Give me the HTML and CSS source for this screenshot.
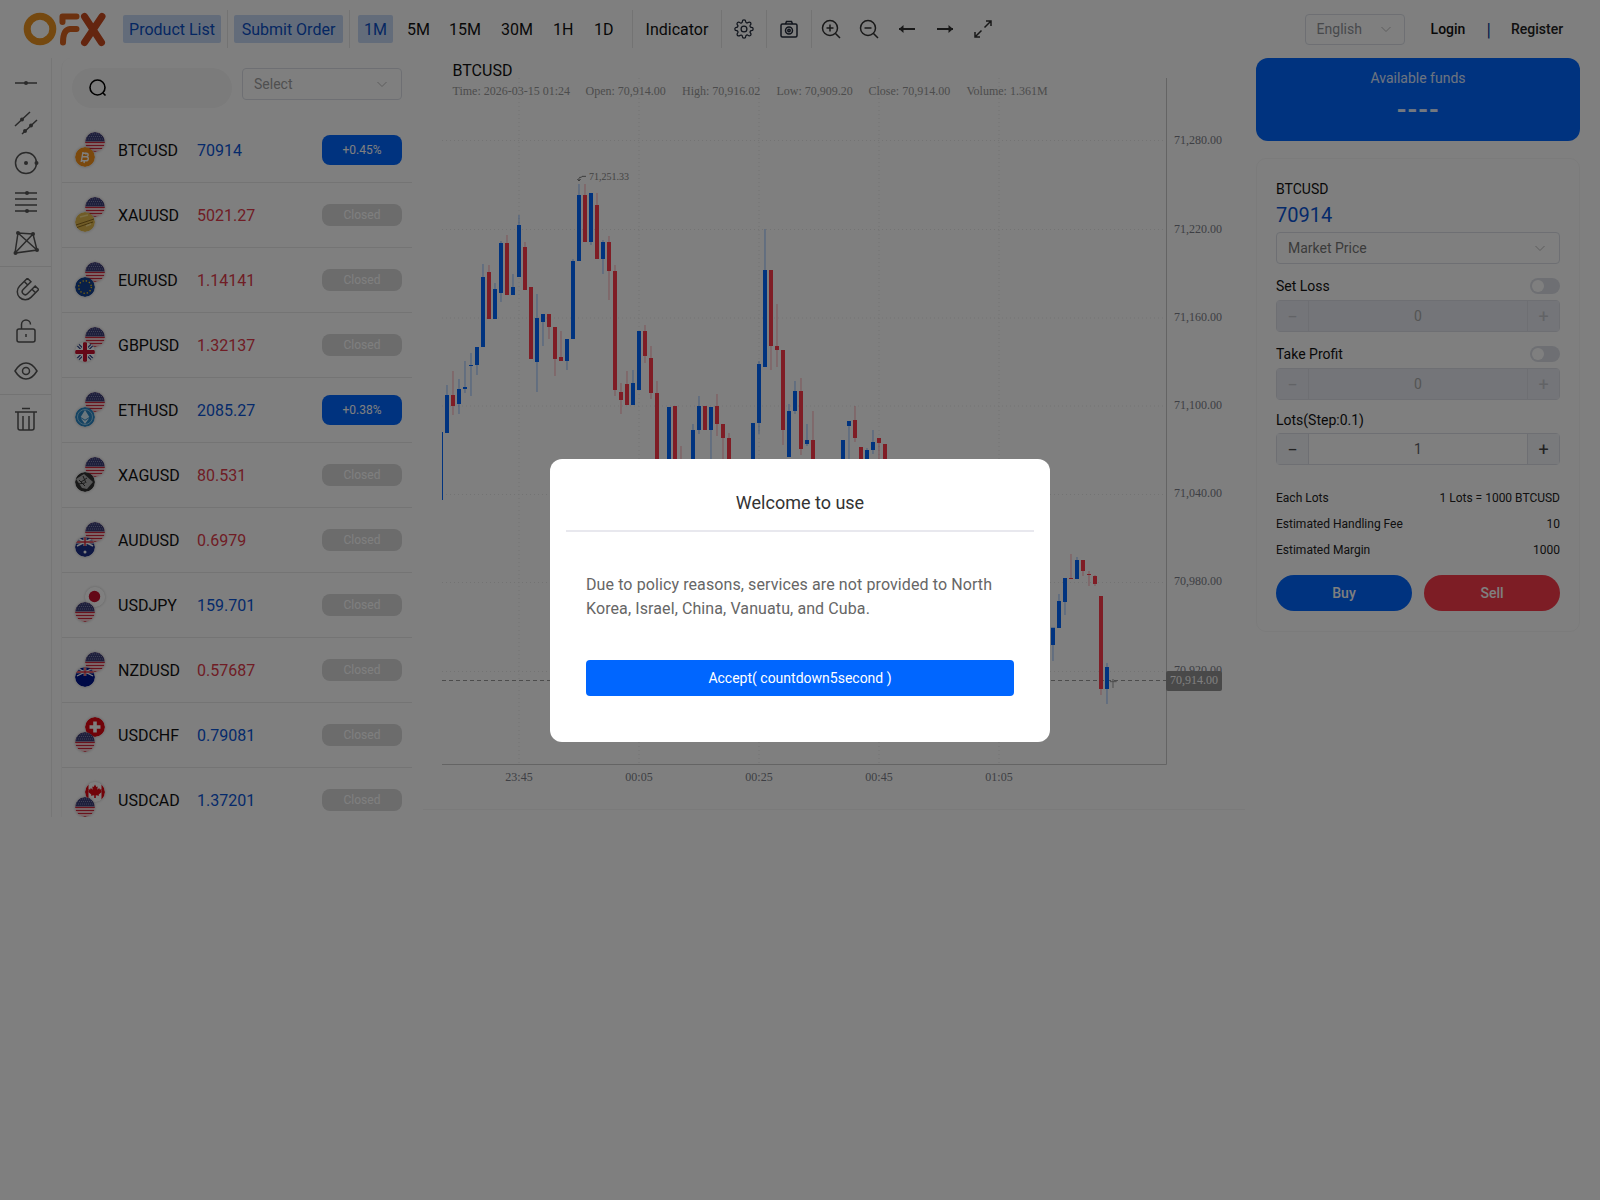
FILE: index.html
```html
<!DOCTYPE html>
<html lang="en">
<head>
<meta charset="utf-8">
<title>OFX</title>
<link rel="stylesheet" href="styles.css">
</head>
<body>
<svg class="defs" aria-hidden="true">
  <defs>
    <clipPath id="disc"><circle cx="10" cy="10" r="10"/></clipPath>
    <symbol id="chev" viewBox="0 0 12 12"><path d="M1.5 4l4.500 4.500L10.500 4" fill="none" stroke="currentColor"/></symbol>
    <symbol id="us" viewBox="0 0 20 20"><g clip-path="url(#disc)"><rect width="20" height="20" fill="#fff"/><path d="M0 1.500h20M0 4.500h20M0 7.500h20M0 10.500h20M0 13.500h20M0 16.500h20M0 19.500h20" stroke="#d3273a" stroke-width="1.500"/><rect width="20" height="9.500" fill="#3c3f78"/><path d="M1 2h18M2 4.500h16M1 7h18" stroke="#8d90b8" stroke-width=".8" stroke-dasharray="1 1"/></g></symbol>
    <symbol id="btc" viewBox="0 0 20 20"><circle cx="10" cy="10" r="10" fill="#f7931a"/><path d="M8 5l-1.800 10M11 5.500l-.4 2M9.400 14l-.4 2M7.600 6.200h3.600c2.600 0 2.600 3.500 0 3.600H7M7 9.800h4.400c2.800.2 2.400 4-.4 4H5.900" fill="none" stroke="#fff" stroke-width="1.400"/></symbol>
    <symbol id="gold" viewBox="0 0 20 20"><circle cx="10" cy="10" r="10" fill="#e0b84e"/><path d="M1 13L19 7M2 15.500L18 10" stroke="#8e6b1e" stroke-width="1"/><path d="M5 5l8-2M11 14l5-2" stroke="#f6dc8c" stroke-width="1.500"/></symbol>
    <symbol id="eu" viewBox="0 0 20 20"><circle cx="10" cy="10" r="10" fill="#13408f"/><circle cx="10" cy="10" r="6.300" fill="none" stroke="#f5c518" stroke-width="1.300" stroke-dasharray="1.300 2"/></symbol>
    <symbol id="gb" viewBox="0 0 20 20"><g clip-path="url(#disc)"><rect width="20" height="20" fill="#fff"/><path d="M0 0l20 20M20 0L0 20" stroke="#2b3f86" stroke-width="3.500"/><path d="M0 0l20 20M20 0L0 20" stroke="#fff" stroke-width="1.200"/><path d="M10 0v20M0 10h20" stroke="#fff" stroke-width="6"/><path d="M10 0v20M0 10h20" stroke="#c8102e" stroke-width="4"/></g></symbol>
    <symbol id="eth" viewBox="0 0 20 20"><circle cx="10" cy="10" r="10" fill="#2b86c5"/><circle cx="10" cy="10" r="7.500" fill="none" stroke="#a4d8f0" stroke-width=".8"/><path d="M10 3l4.300 7L10 12.700 5.700 10zM5.700 11l4.300 6 4.300-6L10 13.700z" fill="#d6eefa"/></symbol>
    <symbol id="xag" viewBox="0 0 20 20"><circle cx="10" cy="10" r="10" fill="#333"/><path d="M1 7l8-5 9 8-6 7-5-1z" fill="#aaa"/><path d="M4 8l6 6M8 4l3 7M12 6l-6 4M3 12l7-1" stroke="#333"/></symbol>
    <symbol id="au" viewBox="0 0 20 20"><g clip-path="url(#disc)"><rect width="20" height="20" fill="#1d2f86"/><g stroke="#fff" stroke-width="1.500"><path d="M2 1l16 8M18 1L2 9"/><path d="M10 0v9M0 5h20" stroke-width="3"/></g><path d="M10 0v9M0 5h20" stroke="#d3273a" stroke-width="1.500"/><circle cx="10" cy="15" r="1.500" fill="#fff"/></g></symbol>
    <symbol id="jp" viewBox="0 0 20 20"><circle cx="10" cy="10" r="10" fill="#fff"/><circle cx="9.500" cy="9.500" r="5.700" fill="#c8102e"/></symbol>
    <symbol id="nz" viewBox="0 0 20 20"><g clip-path="url(#disc)"><rect width="20" height="20" fill="#00148c"/><g stroke="#fff" stroke-width="1.300"><path d="M2 1l16 8M18 1L2 9"/><path d="M10 0v9M0 5h20" stroke-width="2.600"/></g><path d="M10 0v9M0 5h20" stroke="#d3273a" stroke-width="1.300"/></g></symbol>
    <symbol id="ch" viewBox="0 0 20 20"><circle cx="10" cy="10" r="10" fill="#e30613"/><path d="M10 4.500v11M4.500 10h11" stroke="#fff" stroke-width="3.600"/></symbol>
    <symbol id="ca" viewBox="0 0 20 20"><g clip-path="url(#disc)"><rect width="20" height="20" fill="#fff"/><rect width="3.500" height="20" fill="#e30613"/><rect x="16.500" width="3.500" height="20" fill="#e30613"/><path d="M10 2.500l1.400 2.600 1.300-.7-.4 3.300 1.900-1.600.6 1.400 2-.3-.7 2.100.9.500-3.300 2.600.4 1.300-3.300-.4v2.600h-1.600v-2.600l-3.300.4.400-1.300-3.300-2.600.9-.5-.7-2.100 2 .3.600-1.400 1.900 1.600-.4-3.300 1.300.7z" fill="#e30613"/></g></symbol>
  </defs>
</svg>

<header class="topbar">
  <svg class="logo" width="83" height="36" viewBox="23 11 83 36">
    <g fill="none" stroke-width="7" stroke-linecap="round" stroke-linejoin="round">
      <circle cx="40" cy="29" r="12.800" stroke="#ea9220"/>
      <path d="M62.500 22v-5.500h14" stroke="#d9621f" stroke-width="6"/>
      <path d="M63 42.500c0-9 2-13 7-13.500h6.500" stroke="#d9621f" stroke-width="6"/>
      <path d="M84.500 16.500l17 26M102 16.500l-17.500 26" stroke="#c84a1e"/>
    </g>
  </svg>
  <a class="pill pill-list">Product List</a>
  <i class="vline"></i>
  <a class="pill pill-order">Submit Order</a>
  <i class="vline"></i>
  <div class="tabs">
    <a class="pill tab-on">1M</a><a class="tab t5">5M</a><a class="tab t15">15M</a><a class="tab t30">30M</a><a class="tab t1h">1H</a><a class="tab t1d">1D</a>
  </div>
  <i class="vline"></i>
  <a class="indicator">Indicator</a>
  <i class="vline"></i>
  <span class="tool"><svg width="20" height="20" viewBox="0 0 24 24" class="ico"><circle cx="12" cy="12" r="3.500"/><path d="M19.400 15a1.650 1.650 0 0 0 .33 1.820l.06.06a2 2 0 0 1 0 2.830 2 2 0 0 1-2.830 0l-.06-.06a1.650 1.650 0 0 0-1.820-.33 1.650 1.650 0 0 0-1 1.510V21a2 2 0 0 1-2 2 2 2 0 0 1-2-2v-.09A1.650 1.650 0 0 0 9 19.400a1.650 1.650 0 0 0-1.820.33l-.06.06a2 2 0 0 1-2.830 0 2 2 0 0 1 0-2.830l.06-.06a1.650 1.650 0 0 0 .33-1.820 1.650 1.650 0 0 0-1.510-1H3a2 2 0 0 1-2-2 2 2 0 0 1 2-2h.09A1.650 1.650 0 0 0 4.600 9a1.650 1.650 0 0 0-.33-1.820l-.06-.06a2 2 0 0 1 0-2.830 2 2 0 0 1 2.830 0l.06.06a1.650 1.650 0 0 0 1.820.33H9a1.650 1.650 0 0 0 1-1.510V3a2 2 0 0 1 2-2 2 2 0 0 1 2 2v.09a1.650 1.650 0 0 0 1 1.510 1.650 1.650 0 0 0 1.820-.33l.06-.06a2 2 0 0 1 2.830 0 2 2 0 0 1 0 2.830l-.06.06a1.650 1.650 0 0 0-.33 1.820V9a1.650 1.650 0 0 0 1.510 1H21a2 2 0 0 1 2 2 2 2 0 0 1-2 2h-.09a1.650 1.650 0 0 0-1.510 1z"/></svg></span>
  <i class="vline"></i>
  <span class="tool"><svg width="20" height="20" viewBox="0 0 20 20" class="ico"><rect x="2" y="5" width="16" height="13" rx="1.500"/><path d="M6.500 5l1-2.500h5l1 2.500"/><circle cx="10" cy="11.500" r="3.500"/><circle cx="10" cy="11.500" r="1.200"/></svg></span>
  <i class="vline"></i>
  <div class="tools">
    <svg width="20" height="20" viewBox="0 0 20 20" class="ico dark"><circle cx="9" cy="9" r="7.500"/><path d="M14.500 14.500L19 19M9 5.500v7M5.500 9h7"/></svg>
    <svg width="20" height="20" viewBox="0 0 20 20" class="ico dark"><circle cx="9" cy="9" r="7.500"/><path d="M14.500 14.500L19 19M5.500 9h7"/></svg>
    <svg width="20" height="20" viewBox="0 0 20 20" class="ico dark"><path d="M2 10h16" stroke-width="2"/><path d="M6.500 6L2 10l4.500 4" fill="#333" stroke="none"/></svg>
    <svg width="20" height="20" viewBox="0 0 20 20" class="ico dark"><path d="M2 10h16" stroke-width="2"/><path d="M13.500 6L18 10l-4.500 4" fill="#333" stroke="none"/></svg>
    <svg width="20" height="20" viewBox="0 0 20 20" class="ico dark"><path d="M11.500 8.500L18 2M13 2h5v5M8.500 11.500L2 18M2 13v5h5"/></svg>
  </div>
  <div class="auth">
    <div class="lang"><span>English</span><svg width="12" height="12"><use href="#chev"/></svg></div>
    <a class="login">Login</a>
    <span class="sep">|</span>
    <a class="register">Register</a>
  </div>
</header>

<main class="main">
  <aside class="sidebar">
    <div class="side-group">
      <span class="side-ico"><svg width="26" height="26" viewBox="0 0 26 26" class="ico side"><path d="M2 13h22"/><circle cx="13" cy="13" r="2" fill="#555" stroke="none"/></svg></span>
      <span class="side-ico"><svg width="26" height="26" viewBox="0 0 26 26" class="ico side"><path d="M2 16L17 2M9 24L24 10"/><circle cx="9" cy="9.500" r="2" fill="#555" stroke="none"/><circle cx="12" cy="21" r="2" fill="#555" stroke="none"/><circle cx="18" cy="15.500" r="2" fill="#555" stroke="none"/></svg></span>
      <span class="side-ico"><svg width="26" height="26" viewBox="0 0 26 26" class="ico side"><circle cx="13" cy="13" r="10.500"/><circle cx="13" cy="13" r="2" fill="#555" stroke="none"/><circle cx="23.500" cy="13" r="2" fill="#555" stroke="none"/></svg></span>
      <span class="side-ico"><svg width="26" height="26" viewBox="0 0 26 26" class="ico side"><path d="M2 3h22M2 9h22M2 15h22M2 21h22" stroke-width="1.300"/><circle cx="14" cy="3" r="2" fill="#555" stroke="none"/><circle cx="14" cy="21" r="2" fill="#555" stroke="none"/></svg></span>
      <span class="side-ico"><svg width="26" height="26" viewBox="0 0 26 26" class="ico side"><path d="M5 3L2 23 24 20 20 4 5 3zM5 3l19 17M20 4L2 23"/><circle cx="5" cy="3" r="2" fill="#555" stroke="none"/><circle cx="20" cy="4" r="2" fill="#555" stroke="none"/><circle cx="24" cy="20" r="2" fill="#555" stroke="none"/><circle cx="2.500" cy="23" r="2" fill="#555" stroke="none"/></svg></span>
    </div>
    <div class="side-group">
      <span class="side-ico"><svg width="26" height="26" viewBox="0 0 26 26" class="ico side"><g transform="rotate(45 13 13)"><path d="M5 3h5v11a3 3 0 0 0 6 0V3h5v11a8 8 0 0 1-16 0zM5 7.500h5M16 7.500h5"/></g></svg></span>
      <span class="side-ico"><svg width="26" height="26" viewBox="0 0 26 26" class="ico side"><rect x="4" y="11" width="18" height="13" rx="2"/><path d="M8.500 11V6.500a4.500 4.500 0 0 1 9 0M13 16v3"/></svg></span>
      <span class="side-ico"><svg width="26" height="26" viewBox="0 0 26 26" class="ico side"><path d="M2 13c3-5 7-8 11-8s8 3 11 8c-3 5-7 8-11 8s-8-3-11-8z"/><circle cx="13" cy="13" r="3.500"/></svg></span>
    </div>
    <div class="side-group last">
      <span class="side-ico"><svg width="26" height="26" viewBox="0 0 26 26" class="ico side"><path d="M2 6h22M9 2.500h8M5 6v16a2 2 0 0 0 2 2h12a2 2 0 0 0 2-2V6M10 10v14M16 10v14"/></svg></span>
    </div>
  </aside>

  <section class="list">
    <div class="list-head">
      <div class="search"><svg width="20" height="20" viewBox="0 0 20 20" class="ico black"><circle cx="9.500" cy="9.500" r="7.500"/><path d="M15 15l2.500 2.500"/></svg></div>
      <div class="select"><span>Select</span><svg width="12" height="12"><use href="#chev"/></svg></div>
    </div>
    <div class="row"><span class="flags"><svg class="f-top"><use href="#us"/></svg><svg class="f-bot"><use href="#btc"/></svg></span><span class="sym">BTCUSD</span><span class="price up">70914</span><span class="badge open">+0.45%</span></div>
    <div class="row"><span class="flags"><svg class="f-top"><use href="#us"/></svg><svg class="f-bot"><use href="#gold"/></svg></span><span class="sym">XAUUSD</span><span class="price down">5021.27</span><span class="badge closed">Closed</span></div>
    <div class="row"><span class="flags"><svg class="f-top"><use href="#us"/></svg><svg class="f-bot"><use href="#eu"/></svg></span><span class="sym">EURUSD</span><span class="price down">1.14141</span><span class="badge closed">Closed</span></div>
    <div class="row"><span class="flags"><svg class="f-top"><use href="#us"/></svg><svg class="f-bot"><use href="#gb"/></svg></span><span class="sym">GBPUSD</span><span class="price down">1.32137</span><span class="badge closed">Closed</span></div>
    <div class="row"><span class="flags"><svg class="f-top"><use href="#us"/></svg><svg class="f-bot"><use href="#eth"/></svg></span><span class="sym">ETHUSD</span><span class="price up">2085.27</span><span class="badge open">+0.38%</span></div>
    <div class="row"><span class="flags"><svg class="f-top"><use href="#us"/></svg><svg class="f-bot"><use href="#xag"/></svg></span><span class="sym">XAGUSD</span><span class="price down">80.531</span><span class="badge closed">Closed</span></div>
    <div class="row"><span class="flags"><svg class="f-top"><use href="#us"/></svg><svg class="f-bot"><use href="#au"/></svg></span><span class="sym">AUDUSD</span><span class="price down">0.6979</span><span class="badge closed">Closed</span></div>
    <div class="row"><span class="flags"><svg class="f-top"><use href="#jp"/></svg><svg class="f-bot"><use href="#us"/></svg></span><span class="sym">USDJPY</span><span class="price up">159.701</span><span class="badge closed">Closed</span></div>
    <div class="row"><span class="flags"><svg class="f-top"><use href="#us"/></svg><svg class="f-bot"><use href="#nz"/></svg></span><span class="sym">NZDUSD</span><span class="price down">0.57687</span><span class="badge closed">Closed</span></div>
    <div class="row"><span class="flags"><svg class="f-top"><use href="#ch"/></svg><svg class="f-bot"><use href="#us"/></svg></span><span class="sym">USDCHF</span><span class="price up">0.79081</span><span class="badge closed">Closed</span></div>
    <div class="row"><span class="flags"><svg class="f-top"><use href="#ca"/></svg><svg class="f-bot"><use href="#us"/></svg></span><span class="sym">USDCAD</span><span class="price up">1.37201</span><span class="badge closed">Closed</span></div>
  </section>

  <section class="chart">
    <svg class="chart-svg" width="822" height="752" viewBox="423 58 822 752">
      <g class="grid">
        <path d="M442 140.500H1166M442 229.500H1166M442 318H1166M442 406H1166M442 494.500H1166M442 582.500H1166M442 671.500H1166"/>
        <path d="M519 78V764M639 78V764M759 78V764M879 78V764M999 78V764"/>
      </g>
      <path class="axis" d="M1166.500 78V764.500H442"/>
      <text class="c-title" x="452.500" y="76">BTCUSD</text>
      <g class="c-info">
        <text x="452.500" y="95">Time: 2026-03-15 01:24</text>
        <text x="585.500" y="95">Open: 70,914.00</text>
        <text x="682" y="95">High: 70,916.02</text>
        <text x="776.500" y="95">Low: 70,909.20</text>
        <text x="868.500" y="95">Close: 70,914.00</text>
        <text x="966.500" y="95">Volume: 1.361M</text>
      </g>
      <g class="c-ax">
        <text x="1174" y="143.500">71,280.00</text>
        <text x="1174" y="232.500">71,220.00</text>
        <text x="1174" y="320.500">71,160.00</text>
        <text x="1174" y="408.500">71,100.00</text>
        <text x="1174" y="497">71,040.00</text>
        <text x="1174" y="585">70,980.00</text>
        <text x="1174" y="674">70,920.00</text>
      </g>
      <g class="c-ax mid">
        <text x="519" y="780.500">23:45</text>
        <text x="639" y="780.500">00:05</text>
        <text x="759" y="780.500">00:25</text>
        <text x="879" y="780.500">00:45</text>
        <text x="999" y="780.500">01:05</text>
      </g>
      <path class="price-line" d="M442 680.500H1166"/>
      <path class="first" d="M442.500 432V500"/>
      <g transform="translate(430 150) scale(.33333)">
        <path class="wick blue" d="M51 705V735M87 687V792M105 633V729M123 609V738M141 645V675M159 342V381M195 399V417M213 273V456M249 372V411M267 195V225M321 432V726M339 516V588M411 633V660M429 327V333M447 102V135M483 276V285M519 270V372M609 660V699M789 822V840M807 738V852M843 840V930M987 633V852M1005 237V360M1077 762V783M1095 693V792M1131 822V888M1257 828V930M1311 894V900M1329 840V912"/>
        <path class="wick red" d="M69 663V795M177 345V366M231 255V279M285 276V291M357 531V567M375 627V678M393 543V621M465 102V135M501 129V165M537 258V450M555 345V738M573 699V792M591 663V702M645 525V639M663 588V747M681 693V729M753 888V930M861 732V858M879 864V930M897 849V864M1023 588V660M1041 462V651M1059 840V885M1113 684V915M1149 783V870M1275 768V876M1347 879V930"/>
        <path class="body blue" d="M51 735V849M87 717V762M105 711V717M123 645V648M141 591V645M159 381V591M195 417V507M213 279V429M249 411V435M267 225V381M321 504V636M339 492V516M411 567V633M429 333V567M447 135V333M483 129V276M519 276V327M609 699V765M627 543V720M717 771V930M789 840V930M807 768V840M843 771V840M969 819V930M987 642V819M1005 360V651M1077 783V921M1095 723V783M1131 870V882M1239 870V930M1257 813V828M1311 900V930M1329 876V900"/>
        <path class="body red" d="M69 735V768M177 366V507M231 279V435M285 291V420M303 411V627M357 492V531M375 531V627M393 621V633M465 135V276M501 165V327M537 276V363M555 363V720M573 726V750M591 702V765M645 543V618M663 624V729M681 729V930M735 768V930M825 768V840M861 768V822M879 822V864M897 864V930M1023 360V588M1041 588V600M1059 600V840M1113 723V897M1149 870V930M1275 810V864M1293 891V930M1347 864V879M1365 882V930"/>
        <path class="marker" d="M468 79h-12l-2 3h-5l-2 3v8M442 87l5 6 5-6"/>
      </g>
      <text class="c-max" x="589" y="180">71,251.33</text>
      <g transform="translate(1020 530) scale(.33333)">
        <path class="wick blue" d="M99 345V393M117 192V213M135 216V255M171 81V90"/>
        <path class="wick red" d="M153 72V144M189 123V138M207 123V168M225 135V168M243 477V495"/>
        <path class="wick blue" d="M261 399V522"/>
        <path class="body blue" d="M99 293V345M117 213V294M135 144V216M171 90V147M261 411V477"/>
        <path class="body red" d="M153 144V147M189 90V123M207 132V135M225 138V162M243 198V477"/>
        <path class="marker now" d="M279 447V474M270 455H290"/>
      </g>
      <rect class="tag" x="1166" y="671" width="56" height="20" rx="2"/>
      <text class="tag-t" x="1170" y="683.500">70,914.00</text>
    </svg>
  </section>

  <aside class="side-right">
    <div class="funds">
      <div class="funds-l">Available funds</div>
      <div class="funds-v">----</div>
    </div>
    <div class="order">
      <div class="o-sym">BTCUSD</div>
      <div class="o-price">70914</div>
      <div class="select wide"><span>Market Price</span><svg width="12" height="12"><use href="#chev"/></svg></div>
      <div class="o-label"><span>Set Loss</span><i class="toggle"></i></div>
      <div class="stepper off"><b>−</b><span>0</span><b>+</b></div>
      <div class="o-label"><span>Take Profit</span><i class="toggle"></i></div>
      <div class="stepper off"><b>−</b><span>0</span><b>+</b></div>
      <div class="o-label lots"><span>Lots(Step:0.1)</span></div>
      <div class="stepper"><b>−</b><span>1</span><b>+</b></div>
      <div class="facts">
        <div><span>Each Lots</span><span>1 Lots = 1000 BTCUSD</span></div>
        <div><span>Estimated Handling Fee</span><span>10</span></div>
        <div><span>Estimated Margin</span><span>1000</span></div>
      </div>
      <div class="actions"><button class="buy">Buy</button><button class="sell">Sell</button></div>
    </div>
  </aside>
</main>

<div class="overlay">
  <div class="modal">
    <h2 class="m-title">Welcome to use</h2>
    <p class="m-body">Due to policy reasons, services are not provided to North Korea, Israel, China, Vanuatu, and Cuba.</p>
    <button class="m-btn">Accept( countdown5second )</button>
  </div>
</div>
</body>
</html>
```

FILE: styles.css
```css
* { box-sizing: border-box; }
html, body { margin: 0; height: 100%; }
body {
  background: #fff;
  font-family: Roboto, "Noto Sans", sans-serif;
  font-size: 16px;
  color: #111;
  height: 1200px;
  overflow: hidden;
}
.defs { position: absolute; width: 0; height: 0; }

/* top bar */
.topbar { display: flex; align-items: center; height: 58px; padding-left: 23px; }
.logo { margin-right: 17px; flex: none; }
.vline { width: 1px; height: 38px; background: #e6e6e6; flex: none; margin: 0 6px; }
.pill {
  display: flex; align-items: center; justify-content: center; height: 28px; padding: 0;
  background: #c6d9f5; color: #0b4fc4; border-radius: 2px; white-space: nowrap; flex: none;
}
.pill-list { width: 98px; }
.pill-order { width: 109px; }
.tabs { display: flex; align-items: center; margin-left: 2px; width: 268px; }
.tab-on { width: 35px; }
.tab { flex: none; text-align: left; color: #111; }
.t5 { width: 42px; margin-left: 14px; }
.t15 { width: 52px; }
.t30 { width: 52px; }
.t1h { width: 41px; }
.t1d { width: 30px; }
.indicator { flex: none; width: 64px; margin: 0 6px; text-align: center; }
.tool { display: flex; width: 32px; justify-content: center; }
.tools { display: flex; gap: 18px; margin-left: 3px; }
.ico { fill: none; stroke: #222a3a; stroke-width: 1.500; flex: none; }
.ico.dark { stroke: #333; }
.ico.side { stroke: #555; stroke-width: 1.500; }
.ico.black { stroke: #000; stroke-width: 1.600; }
.auth { display: flex; align-items: center; margin-left: auto; padding-right: 35px; font-size: 14px; }
.lang {
  display: flex; align-items: center; justify-content: space-between;
  width: 100px; height: 31px; padding: 0 12px 0 11px;
  border: 1px solid #dcdfe6; border-radius: 4px; color: #909399;
}
.lang svg, .select svg { color: #bbb; }
.login { width: 36px; margin-left: 26px; font-weight: 500; color: #111; }
.sep { margin-left: 20px; font-size: 18px; color: #0b3d99; }
.register { width: 54px; margin-left: 20px; color: #222; font-weight: 500; }

/* layout */
.main { display: flex; height: 759px; }
.sidebar { width: 52px; border-right: 1px solid #ececec; padding-top: 5px; flex: none; }
.side-group { display: flex; flex-direction: column; align-items: center; padding-bottom: 3px; margin-bottom: 4px; border-bottom: 1px solid #e6e6e6; }
.side-group.last { border-bottom: 0; }
.side-ico { display: flex; align-items: center; justify-content: center; width: 100%; height: 40px; }

/* list */
.list { width: 351px; margin-left: 9px; overflow: hidden; flex: none; border-left: 1px solid #f7f7f7; border-top-left-radius: 10px; }
.list-head { display: flex; gap: 10px; height: 60px; padding: 10px 10px 0 10px; }
.search { display: flex; align-items: center; width: 160px; height: 40px; padding-left: 16px; background: #f6f6f6; border-radius: 20px; }
.select {
  display: flex; align-items: center; justify-content: space-between;
  width: 160px; height: 32px; padding: 0 13px 0 11px;
  border: 1px solid #dcdfe6; border-radius: 4px; font-size: 14px; color: #a0a0a0;
}
.row { display: flex; align-items: center; height: 65px; padding: 0 10px 0 13px; border-bottom: 1px solid #e9e9e9; }
.flags { position: relative; width: 32px; height: 36px; margin-right: 11px; flex: none; }
.f-top, .f-bot { position: absolute; width: 20px; height: 20px; border-radius: 50%; box-shadow: 0 0 3px rgba(0, 0, 0, .25); }
.f-top { left: 10px; top: 0; }
.f-bot { left: 0; top: 15px; }
.sym { width: 79px; flex: none; font-size: 16px; }
.price { font-size: 16px; }
.up { color: #0a55d6; }
.down { color: #e03a4a; }
.badge { display: flex; align-items: center; justify-content: center; width: 80px; margin-left: auto; color: #fff; font-size: 12px; border-radius: 8px; }
.badge.open { height: 30px; background: #0066ff; }
.badge.closed { height: 22px; background: #d8d8d8; }

/* chart */
.chart { width: 822px; height: 752px; margin-left: 11px; flex: none; border-bottom: 1px solid #f5f5f5; }
.chart-svg { display: block; }
.grid path { fill: none; stroke: #e6e6e6; stroke-dasharray: 1 3; }
.axis { fill: none; stroke: #c8c8c8; }
.c-title { font-size: 16px; fill: #111; }
.c-info text { font-family: "Liberation Serif", serif; font-size: 12px; fill: #999; }
.c-ax text { font-family: "Liberation Serif", serif; font-size: 12px; fill: #7c7f88; }
.c-ax.mid text { text-anchor: middle; }
.c-max { font-family: "Liberation Serif", serif; font-size: 10px; fill: #888; }
.price-line { stroke: #999; stroke-dasharray: 4 3; fill: none; }
.first { stroke: #0066ff; fill: none; }
.wick { fill: none; stroke-width: 3; opacity: .45; }
.body { fill: none; stroke-width: 12; }
.blue { stroke: #0066ff; }
.red { stroke: #ff3a4a; }
.marker { fill: none; stroke: #777; stroke-width: 3; }
.marker.now { stroke: #999; }
.tag { fill: #929292; }
.tag-t { font-family: "Liberation Serif", serif; font-size: 12px; fill: #fff; }

/* right column */
.side-right { width: 324px; margin-left: 11px; flex: none; }
.funds { height: 83px; background: #0066ff; border-radius: 12px; color: #fff; text-align: center; padding-top: 9px; }
.funds-l { font-size: 14px; line-height: 22px; opacity: .85; }
.funds-v { font-size: 26px; font-weight: 700; line-height: 26px; margin-top: 8px; letter-spacing: .5px; opacity: .9; }
.order { margin-top: 17px; height: 474px; padding: 19px 19px 0; border: 1px solid #f6f6f6; border-radius: 10px; }
.o-sym { font-size: 14px; line-height: 22px; }
.o-price { font-size: 20px; line-height: 30px; color: #0a55d6; }
.select.wide { width: 284px; height: 32px; margin-top: 2px; color: #777; }
.o-label { display: flex; align-items: center; justify-content: space-between; height: 22px; margin-top: 11px; margin-bottom: 3px; font-size: 14px; }
.o-label.lots { margin-top: 9px; margin-bottom: 2px; }
.toggle { position: relative; width: 30px; height: 16px; border-radius: 8px; background: #dcdfe6; display: block; }
.toggle::after { content: ""; position: absolute; left: 2px; top: 2px; width: 12px; height: 12px; border-radius: 50%; background: #fff; }
.stepper { display: flex; height: 32px; border: 1px solid #dcdfe6; border-radius: 4px; font-size: 14px; color: #606266; }
.stepper b { display: flex; align-items: center; justify-content: center; width: 32px; background: #f2f4f8; font-weight: 400; font-size: 18px; color: #444; flex: none; }
.stepper b:first-child { border-right: 1px solid #dcdfe6; }
.stepper b:last-child { border-left: 1px solid #dcdfe6; }
.stepper span { flex: 1; display: flex; align-items: center; justify-content: center; }
.stepper.off { background: #e9ebf2; color: #aaa; }
.stepper.off b { background: #e9ebf2; color: #c4c6cc; }
.facts { margin-top: 20px; font-size: 12px; }
.facts div { display: flex; justify-content: space-between; height: 26px; align-items: center; color: #222; }
.actions { display: flex; gap: 12px; margin-top: 12px; }
.actions button { flex: 1; height: 36px; border: 0; border-radius: 18px; color: #fff; font: inherit; font-size: 14px; font-weight: 500; }
.buy { background: #0066ff; }
.sell { background: #fa3a4a; }

/* dialog */
.overlay { position: fixed; inset: 0; display: flex; align-items: center; justify-content: center; background: rgba(0, 0, 0, .5); }
.modal { width: 500px; height: 283px; padding: 0 16px; background: #fff; border-radius: 12px; }
.m-title { margin: 0; height: 73px; line-height: 88px; text-align: center; font-size: 18px; font-weight: 400; color: #333; border-bottom: 2px solid #e8e8ee; }
.m-body { margin: 41px 20px 0; font-size: 16px; line-height: 24px; letter-spacing: .1px; color: #666; }
.m-btn { display: block; width: 428px; height: 36px; margin: 39px 20px 0; border: 0; border-radius: 4px; background: #0066ff; color: #fff; font: inherit; font-size: 14px; }
```
